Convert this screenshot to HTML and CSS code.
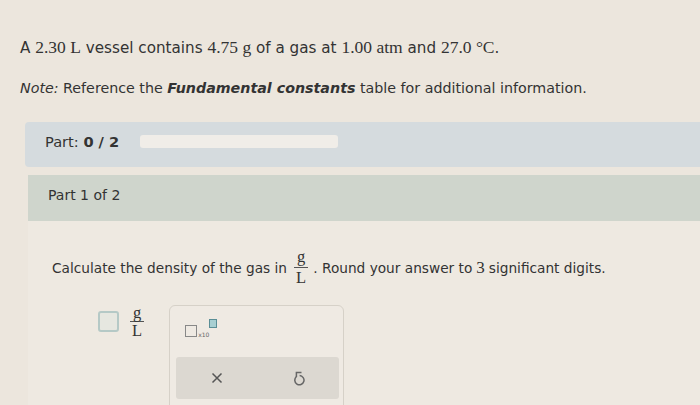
FILE: index.html
```html
<!DOCTYPE html>
<html lang="en">
<head>
    <meta charset="UTF-8">
    <title>Gas density</title>
    <link rel="stylesheet" href="styles.css">
</head>
<body>
    <div class="question">
        <p class="given">A <span class="num">2.30 L</span> vessel contains <span class="num">4.75 g</span> of a gas at <span class="num">1.00 atm</span> and <span class="num">27.0 °C</span>.</p>
        <p class="note"><i>Note:</i> Reference the <b><i>Fundamental constants</i></b> table for additional information.</p>
    </div>

    <div class="part-status">
        <span>Part: <b>0 / 2</b></span>
        <div class="progress"></div>
    </div>

    <div class="part-head">Part 1 of 2</div>

    <div class="part-body">
        <p class="prompt">Calculate the density of the gas in
            <span class="frac"><span class="top">g</span><span class="bot">L</span></span>. Round your answer to <span class="num">3</span> significant digits.</p>

        <div class="answer-row">
            <div class="answer">
                <div class="answer-box"></div>
                <span class="frac small"><span class="top">g</span><span class="bot">L</span></span>
            </div>
            <div class="tools">
                <div class="sci">
                    <span class="sci-base"></span><span class="sci-x">x10</span><span class="sci-exp"></span>
                </div>
                <div class="tool-bar">
                    <svg width="14" height="14" viewBox="0 0 14 14">
                        <path d="M2.5 2.5 L11.5 11.5 M11.5 2.5 L2.5 11.5" stroke="#555" stroke-width="1.5" fill="none"/>
                    </svg>
                    <svg width="14" height="16" viewBox="0 0 14 16">
                        <path d="M4.3 6.8 A4.6 4.6 0 1 0 7.6 5.6" stroke="#666" stroke-width="1.5" fill="none"/>
                        <path d="M9.5 2.6 H4.4 V7" stroke="#666" stroke-width="1.5" fill="none"/>
                    </svg>
                </div>
            </div>
        </div>
    </div>
</body>
</html>
```

FILE: styles.css
```css
body {
    margin: 0;
    background-color: #ece6dd;
    font-family: "DejaVu Sans", Verdana, sans-serif;
    font-size: 14px;
    color: #333;
    overflow: hidden;
}
p {
    margin: 0;
}
.num {
    font-family: "Liberation Serif", "Times New Roman", serif;
    font-size: 16px;
}
.question {
    padding: 37px 20px 0 20px;
}
.given {
    height: 20px;
    font-size: 15.2px;
}
.given .num {
    font-size: 17.5px;
}
.note {
    margin-top: 23px;
    height: 20px;
    font-size: 14.25px;
}
.part-status {
    margin: 22px 0 0 25px;
    height: 45px;
    background-color: #d5dbde;
    border-radius: 4px 0 0 4px;
    display: flex;
    align-items: center;
    padding: 0 0 6px 20px;
    box-sizing: border-box;
    gap: 21px;
    font-size: 14.6px;
}
.progress {
    width: 198px;
    height: 13px;
    background-color: #f0ede8;
    border-radius: 3px;
}
.part-head {
    margin: 8px 0 0 28px;
    height: 46px;
    background-color: #cfd5cc;
    padding: 12px 0 0 20px;
    box-sizing: border-box;
    font-size: 14px;
}
.part-body {
    margin-left: 28px;
    padding: 26px 0 0 24px;
    background-color: #eee9e1;
    height: 200px;
}
.prompt {
    display: flex;
    align-items: center;
    gap: 4px;
    font-size: 13.7px;
}
.prompt .num {
    font-size: 17px;
}
.prompt .frac {
    margin: 0 1px 0 3px;
}
.frac {
    display: inline-flex;
    flex-direction: column;
    align-items: center;
    font-family: "Liberation Serif", "Times New Roman", serif;
    font-size: 16.5px;
    line-height: 20px;
}
.frac .top {
    border-bottom: 1px solid #555;
    padding: 0 3px;
}
.frac.small {
    line-height: 17px;
}
.answer-row {
    display: flex;
    align-items: flex-start;
    margin-top: 16px;
    margin-left: 46px;
}
.answer {
    display: flex;
    align-items: center;
    gap: 11px;
    padding-top: 0;
}
.answer-box {
    width: 17px;
    height: 17px;
    border: 2px solid #b5c9c6;
    border-radius: 3px;
    background-color: #e6e7e0;
}
.tools {
    margin: 1px 0 0 25px;
    width: 175px;
    height: 110px;
    border: 1px solid #d6d1c8;
    border-radius: 6px;
    background-color: #efeae3;
    padding: 0 4px 0 6px;
    box-sizing: border-box;
}
.sci {
    display: flex;
    align-items: flex-end;
    margin: 13px 0 0 9px;
    height: 18px;
}
.sci-base {
    width: 10px;
    height: 10px;
    border: 1px solid #888;
}
.sci-x {
    font-size: 6px;
    color: #666;
    margin: 0 0 -1px 1px;
}
.sci-exp {
    width: 6px;
    height: 7px;
    border: 1px solid #5a8e96;
    background-color: #a7cfd2;
    align-self: flex-start;
}
.tool-bar {
    margin-top: 20px;
    height: 42px;
    background-color: #dcd8d1;
    border-radius: 3px;
    display: flex;
    align-items: center;
    justify-content: space-around;
}
```
